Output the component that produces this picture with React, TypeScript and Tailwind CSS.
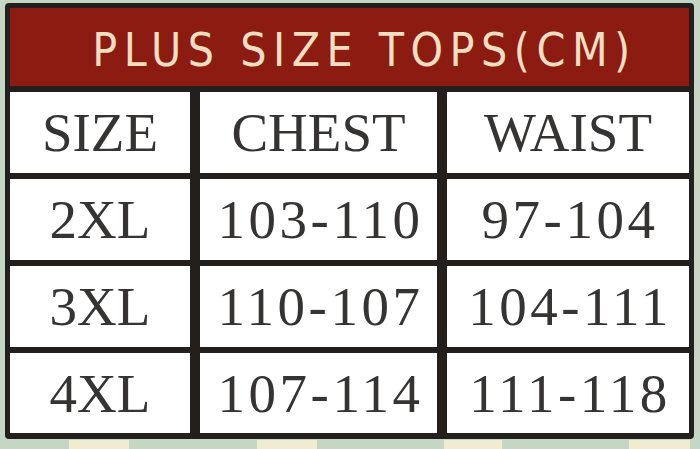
const rows = [
  ['2XL', '103-110', '97-104'],
  ['3XL', '110-107', '104-111'],
  ['4XL', '107-114', '111-118'],
];

const serif = { fontFamily: '"Liberation Serif", "Times New Roman", serif' };

function Cell({ children, num }: { children: React.ReactNode; num?: boolean }) {
  return (
    <div
      className={`bg-white flex items-center justify-center text-[55px] leading-none text-[#363432] ${num ? 'tracking-[3.5px] pl-[4px]' : ''}`}
      style={serif}
    >
      {children}
    </div>
  );
}

export default function App() {
  return (
    <div className="w-[700px] h-[449px] bg-[#c6d6c4] overflow-hidden pt-[3px] pl-[5px]">
      <div className="w-[689px] h-[436px] bg-[#231f1c] rounded-[4px] pt-[5px] px-[5px] pb-[6px] flex flex-col gap-[6px]">
        <div className="h-[78px] bg-[#8c1b12] flex items-center justify-center pt-[6px] pl-[30px]">
          <span
            className="text-[46px] leading-none text-[#f0dec0] tracking-[6.5px]"
            style={{ fontFamily: '"Liberation Sans Narrow", "DejaVu Sans Condensed", "Roboto Condensed", "Liberation Sans", sans-serif', fontStretch: 'condensed' }}
          >
            PLUS SIZE TOPS(CM)
          </span>
        </div>
        <div className="flex-1 grid grid-cols-[180px_237px_1fr] grid-rows-[81px_81px_81px_1fr] gap-x-[10px] gap-y-[6px]">
          <Cell>SIZE</Cell>
          <Cell>CHEST</Cell>
          <Cell>WAIST</Cell>
          {rows.map((r) => (
            <>
              <Cell key={r[0]}>{r[0]}</Cell>
              <Cell num>{r[1]}</Cell>
              <Cell num>{r[2]}</Cell>
            </>
          ))}
        </div>
      </div>
      <div className="flex h-[10px] -ml-[5px] mt-[1px]">
        <div className="w-[69px]" />
        <div className="w-[60px] bg-[#f0ecd2]" />
        <div className="w-[128px]" />
        <div className="w-[60px] bg-[#f0ecd2]" />
        <div className="w-[127px]" />
        <div className="w-[58px] bg-[#f0ecd2]" />
        <div className="w-[127px]" />
        <div className="w-[61px] bg-[#f0ecd2]" />
      </div>
    </div>
  );
}
